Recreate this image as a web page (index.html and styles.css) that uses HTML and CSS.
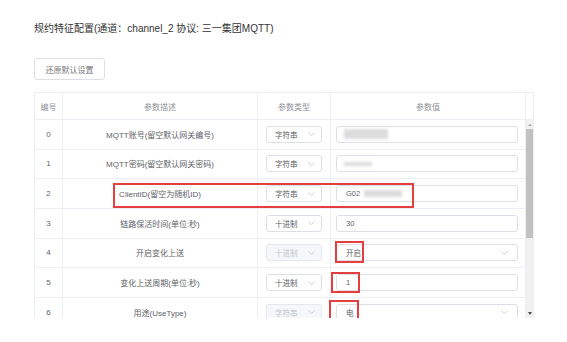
FILE: index.html
```html
<!DOCTYPE html>
<html lang="zh-CN">
<head>
    <meta charset="UTF-8">
    <title>规约特征配置</title>
    <link rel="stylesheet" href="styles.css">
</head>
<body>
<div class="page">
    <h1 class="title">规约特征配置(通道：channel_2 协议: 三一集团MQTT)</h1>
    <button class="btn-reset">还原默认设置</button>

    <div class="table">
        <div class="thead">
            <div class="row">
                <div class="cell">编号</div>
                <div class="cell">参数描述</div>
                <div class="cell">参数类型</div>
                <div class="cell">参数值</div>
            </div>
            <div class="gutter"></div>
        </div>
        <div class="tbody">
            <div class="rows">
                <div class="row">
                    <div class="cell">0</div>
                    <div class="cell">MQTT账号(留空默认网关编号)</div>
                    <div class="cell"><div class="select">字符串<svg class="arrow" width="7" height="4" viewBox="0 0 7 4"><polyline points="0.5,0.5 3.5,3.5 6.5,0.5"/></svg></div></div>
                    <div class="cell left"><div class="input"><span class="blur wide"></span></div></div>
                </div>
                <div class="row">
                    <div class="cell">1</div>
                    <div class="cell">MQTT密码(留空默认网关密码)</div>
                    <div class="cell"><div class="select">字符串<svg class="arrow" width="7" height="4" viewBox="0 0 7 4"><polyline points="0.5,0.5 3.5,3.5 6.5,0.5"/></svg></div></div>
                    <div class="cell left"><div class="input"><span class="blur thin"></span></div></div>
                </div>
                <div class="row">
                    <div class="cell">2</div>
                    <div class="cell">ClientID(留空为随机ID)</div>
                    <div class="cell"><div class="select">字符串<svg class="arrow" width="7" height="4" viewBox="0 0 7 4"><polyline points="0.5,0.5 3.5,3.5 6.5,0.5"/></svg></div></div>
                    <div class="cell left"><div class="input">G02<span class="blur mid"></span></div></div>
                </div>
                <div class="row">
                    <div class="cell">3</div>
                    <div class="cell">链路保活时间(单位:秒)</div>
                    <div class="cell"><div class="select">十进制<svg class="arrow" width="7" height="4" viewBox="0 0 7 4"><polyline points="0.5,0.5 3.5,3.5 6.5,0.5"/></svg></div></div>
                    <div class="cell left"><div class="input">30</div></div>
                </div>
                <div class="row">
                    <div class="cell">4</div>
                    <div class="cell">开启变化上送</div>
                    <div class="cell"><div class="select disabled">十进制<svg class="arrow" width="7" height="4" viewBox="0 0 7 4"><polyline points="0.5,0.5 3.5,3.5 6.5,0.5"/></svg></div></div>
                    <div class="cell left"><div class="input">开启<svg class="arrow" width="7" height="4" viewBox="0 0 7 4"><polyline points="0.5,0.5 3.5,3.5 6.5,0.5"/></svg></div></div>
                </div>
                <div class="row">
                    <div class="cell">5</div>
                    <div class="cell">变化上送周期(单位:秒)</div>
                    <div class="cell"><div class="select">十进制<svg class="arrow" width="7" height="4" viewBox="0 0 7 4"><polyline points="0.5,0.5 3.5,3.5 6.5,0.5"/></svg></div></div>
                    <div class="cell left"><div class="input">1</div></div>
                </div>
                <div class="row">
                    <div class="cell">6</div>
                    <div class="cell">用途(UseType)</div>
                    <div class="cell"><div class="select disabled">字符串<svg class="arrow" width="7" height="4" viewBox="0 0 7 4"><polyline points="0.5,0.5 3.5,3.5 6.5,0.5"/></svg></div></div>
                    <div class="cell left"><div class="input">电<svg class="arrow" width="7" height="4" viewBox="0 0 7 4"><polyline points="0.5,0.5 3.5,3.5 6.5,0.5"/></svg></div></div>
                </div>
            </div>
            <div class="scrollbar">
                <div class="sb-up"></div>
                <div class="sb-thumb"></div>
                <div class="sb-space"></div>
                <div class="sb-down"></div>
            </div>
        </div>
    </div>

    <!-- 标注框 -->
    <div class="mark mark-client"></div>
    <div class="mark mark-open"></div>
    <div class="mark mark-period"></div>
    <div class="mark mark-use"></div>
</div>
</body>
</html>
```

FILE: styles.css
```css
body {
    margin: 0;
    background: #fff;
    font-family: "Liberation Sans", "Noto Sans CJK SC", sans-serif;
}

.page {
    position: relative;
    padding: 22px 0 0 34px;
}

.title {
    margin: 0;
    font-size: 10px;
    line-height: 14px;
    font-weight: normal;
    color: #333;
}

.btn-reset {
    display: block;
    margin-top: 22px;
    width: 71px;
    height: 22px;
    padding: 0;
    background: #fff;
    border: 1px solid #dcdfe6;
    border-radius: 3px;
    font-family: inherit;
    font-size: 8px;
    color: #777;
}

.table {
    margin-top: 12px;
    width: 500px;
    box-sizing: border-box;
    border: 1px solid #ebeef5;
    border-bottom: none;
    font-size: 8px;
    color: #606266;
}

.thead {
    display: flex;
    height: 26px;
    border-bottom: 1px solid #ebeef5;
    color: #909399;
}

.thead .row {
    height: 26px;
    border-bottom: none;
}

.gutter {
    width: 7px;
}

.row {
    display: grid;
    grid-template-columns: 28px 195px 73px 195px;
    height: 29.67px;
    box-sizing: border-box;
    border-bottom: 1px solid #ebeef5;
}

.cell {
    display: flex;
    align-items: center;
    justify-content: center;
    border-right: 1px solid #ebeef5;
    white-space: nowrap;
}

.cell.left {
    justify-content: flex-start;
    padding-left: 5px;
}

.tbody {
    display: flex;
    height: 198px;
}

.rows {
    overflow: hidden;
}

.select,
.input {
    display: flex;
    align-items: center;
    box-sizing: border-box;
    height: 17px;
    border: 1px solid #dcdfe6;
    border-radius: 3px;
    background: #fff;
    font-size: 7.5px;
    color: #606266;
}

.select {
    width: 56px;
    padding: 0 6px 0 8px;
    justify-content: space-between;
}

.select.disabled {
    background: #f5f7fa;
    border-color: #e4e7ed;
    color: #c0c4cc;
}

.input {
    width: 182px;
    padding: 0 9px 0 9px;
    justify-content: space-between;
}

.input:not(:has(.arrow)) {
    justify-content: flex-start;
}

.arrow polyline {
    fill: none;
    stroke: #c0c4cc;
    stroke-width: 0.8;
}

.blur {
    display: inline-block;
    background: #dcdcdc;
    filter: blur(1.5px);
}

.blur.wide {
    width: 44px;
    height: 10px;
    margin-left: -2px;
}

.blur.thin {
    width: 28px;
    height: 4px;
    margin-left: -2px;
}

.blur.mid {
    width: 38px;
    height: 7px;
    margin-left: 4px;
}

.scrollbar {
    width: 7px;
    display: flex;
    flex-direction: column;
    background: #f1f1f1;
}

.sb-up,
.sb-down {
    height: 9px;
    display: flex;
    align-items: center;
    justify-content: center;
}

.sb-up::before {
    content: "";
    border-left: 2px solid transparent;
    border-right: 2px solid transparent;
    border-bottom: 2px solid #a3a3a3;
}

.sb-down::before {
    content: "";
    border-left: 2.5px solid transparent;
    border-right: 2.5px solid transparent;
    border-top: 3px solid #505050;
}

.sb-thumb {
    height: 109px;
    background: #c1c1c1;
}

.sb-space {
    flex: 1;
}

.mark {
    position: absolute;
    box-sizing: border-box;
    border: 2px solid #e53e3e;
}

.mark-client {
    left: 113px;
    top: 183px;
    width: 301px;
    height: 25px;
}

.mark-open {
    left: 335px;
    top: 241px;
    width: 29px;
    height: 22px;
}

.mark-period {
    left: 331px;
    top: 272px;
    width: 29px;
    height: 21px;
}

.mark-use {
    left: 329px;
    top: 300px;
    width: 30px;
    height: 22px;
}
```
